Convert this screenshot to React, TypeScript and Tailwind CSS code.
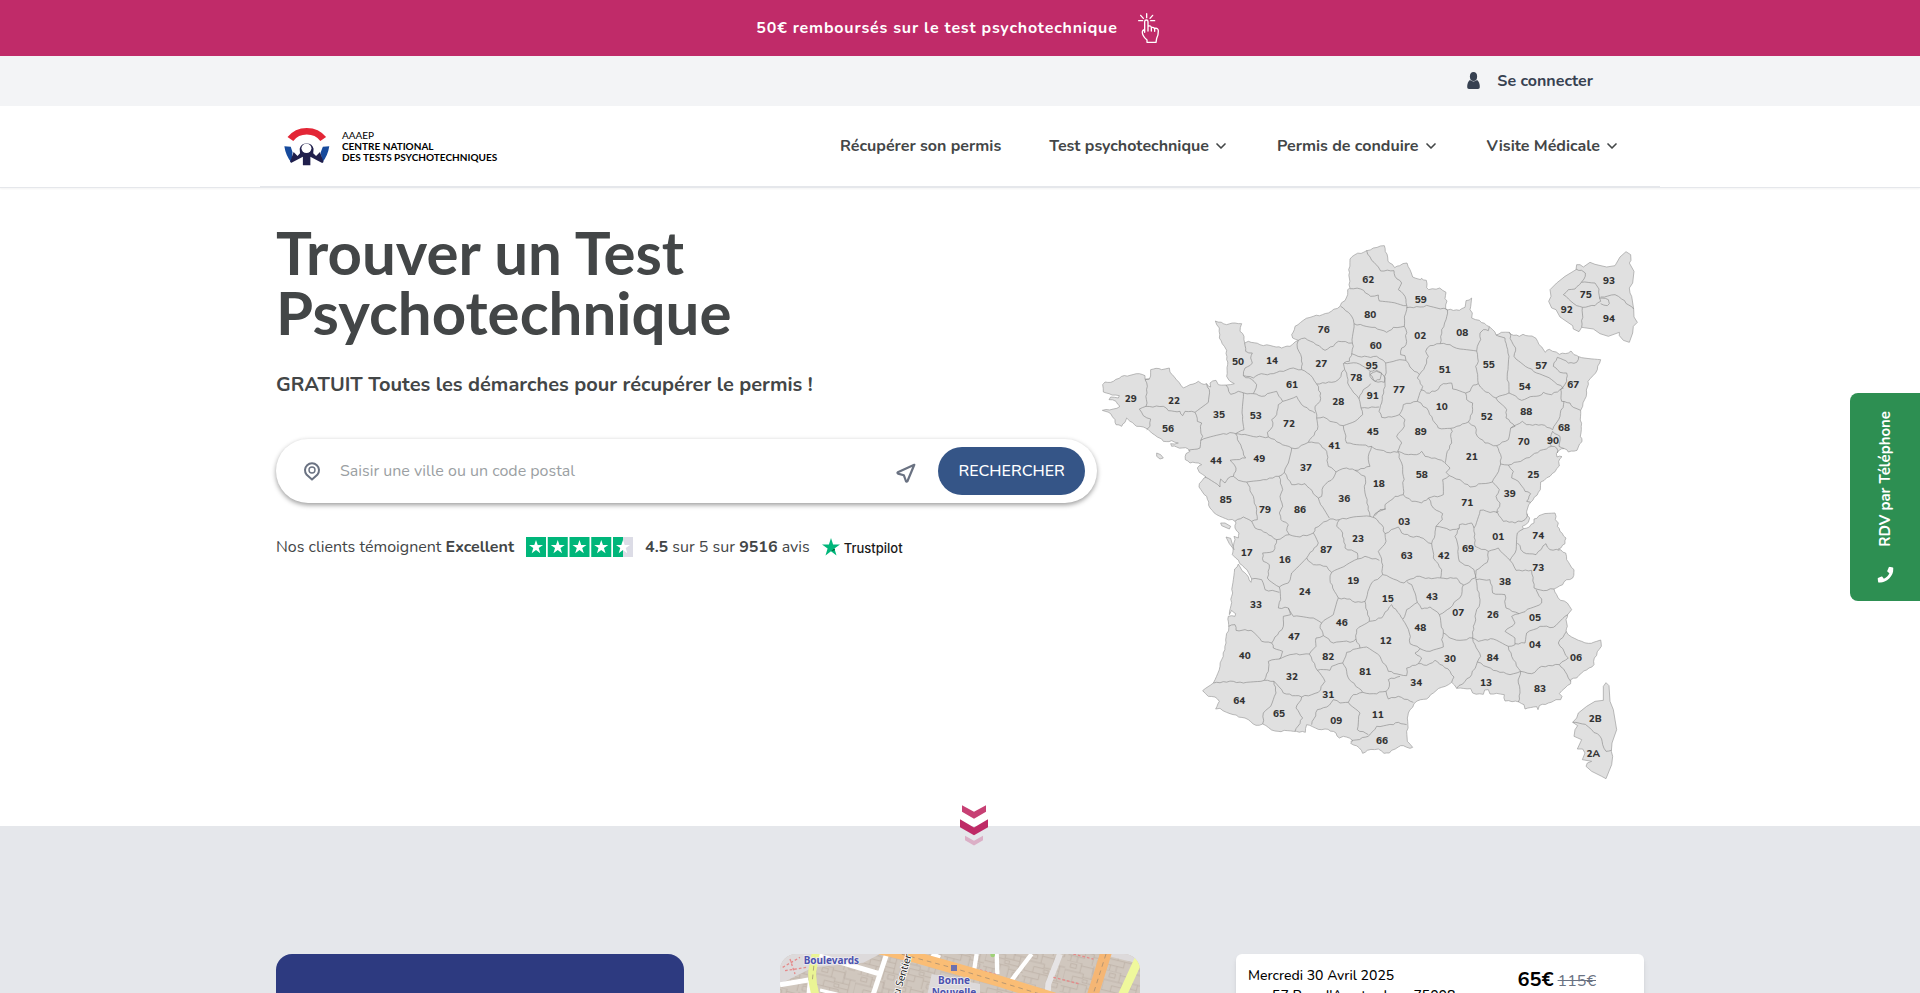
import React from 'react';
import { ChevronDown } from 'lucide-react';
import { FaPhone } from 'react-icons/fa';

const NAV_ITEMS = [
  { label: 'Récupérer son permis', hasMenu: false },
  { label: 'Test psychotechnique', hasMenu: true },
  { label: 'Permis de conduire', hasMenu: true },
  { label: 'Visite Médicale', hasMenu: true },
];

const MAINLAND =
  '913,48 923,82 924,95 937,104 944,114 959,108 981,100 994,130 998,142 1022,150 1024,146 1039,152 1040,174 1046,180 1079,175 1098,188 1095,207 1101,214 1097,238 1102,241 1138,242 1155,233 1158,213 1175,205 1170,240 1177,250 1175,265 1198,272 1228,291 1238,300 1248,316 1264,308 1288,308 1301,317 1318,320 1329,314 1356,319 1368,326 1377,345 1391,361 1396,368 1408,359 1438,374 1465,370 1473,364 1482,375 1496,381 1562,390 1552,420 1524,455 1520,490 1508,530 1502,542 1504,600 1501,620 1506,636 1495,652 1491,662 1465,667 1453,657 1438,661 1429,672 1431,682 1446,681 1436,695 1438,709 1410,740 1382,757 1381,780 1352,818 1343,835 1340,855 1349,865 1345,878 1327,890 1330,897 1348,892 1362,880 1362,868 1385,855 1425,850 1428,860 1426,870 1435,880 1432,890 1440,905 1458,925 1455,942 1435,958 1457,970 1460,990 1482,1020 1478,1045 1460,1050 1448,1065 1422,1078 1430,1095 1442,1112 1462,1120 1475,1140 1463,1155 1458,1170 1462,1190 1458,1205 1475,1222 1505,1235 1525,1241 1550,1235 1562,1231 1564,1250 1543,1285 1542,1305 1527,1315 1505,1330 1490,1345 1472,1350 1472,1362 1455,1375 1438,1392 1446,1400 1442,1410 1428,1410 1405,1420 1378,1428 1374,1440 1370,1431 1335,1438 1332,1425 1317,1417 1275,1414 1273,1395 1250,1391 1230,1393 1225,1380 1214,1381 1210,1394 1178,1390 1172,1377 1130,1376 1115,1358 1085,1373 1052,1395 1040,1408 1022,1410 1002,1422 985,1450 982,1465 982,1535 998,1553 990,1556 970,1548 955,1552 935,1562 928,1570 912,1571 895,1558 862,1562 848,1571 838,1555 812,1541 818,1532 808,1525 790,1520 778,1525 768,1510 735,1498 725,1500 680,1485 676,1508 640,1505 585,1504 548,1483 528,1487 505,1470 495,1465 450,1452 420,1436 407,1438 418,1415 405,1402 385,1400 368,1383 400,1360 420,1310 438,1240 446,1185 445,1160 465,1160 467,1152 455,1142 448,1155 455,1100 464,1018 475,1003 482,1015 500,1035 513,1058 515,1048 505,1028 488,1008 467,985 457,975 460,950 465,930 462,920 475,925 477,910 465,895 468,880 465,875 410,855 390,835 380,800 357,772 358,762 372,745 378,742 358,728 352,715 365,705 355,700 330,700 316,690 318,672 330,665 325,658 290,652 275,650 272,642 295,640 275,633 250,635 245,628 232,622 215,610 205,600 190,592 170,590 150,575 140,565 135,578 125,590 108,585 105,570 92,552 67,542 100,538 120,530 108,515 87,510 92,502 115,505 118,498 87,492 70,487 68,465 75,457 100,455 125,440 150,437 178,432 195,438 195,448 208,448 212,420 228,416 245,420 268,415 270,428 283,442 297,458 310,475 330,465 355,455 365,462 380,462 392,472 390,460 408,452 415,465 440,466 463,462 450,455 440,440 443,405 440,390 440,362 433,350 418,325 418,295 406,274 440,285 465,280 485,282 480,305 492,320 494,340 505,335 540,345 580,350 605,355 630,350 655,332 638,325 635,315 645,290 670,272 700,260 745,250 780,230 800,202 803,195 803,180 810,175 808,145 806,120 810,88 825,75 860,63 880,55 913,48';

const ISLANDS = [
  '230,670 242,675 250,685 240,688 230,680 230,670',
  '422,880 435,880 452,890 448,898 425,888 422,880',
  '438,922 452,926 462,960 448,942 438,922',
  '1570,1370 1578,1359 1587,1368 1590,1415 1600,1440 1610,1500 1596,1540 1594,1565 1598,1580 1595,1605 1578,1647 1565,1640 1535,1625 1518,1610 1522,1600 1535,1595 1507,1590 1515,1570 1508,1558 1492,1558 1505,1530 1482,1520 1485,1500 1493,1488 1478,1478 1490,1465 1495,1450 1520,1430 1545,1415 1570,1412 1570,1370',
  '1490,105 1500,105 1510,112 1530,98 1545,104 1580,112 1605,108 1620,82 1638,66 1652,75 1653,92 1648,100 1662,125 1658,160 1648,175 1650,190 1655,200 1661,238 1662,262 1672,278 1660,290 1658,310 1648,338 1630,332 1618,318 1618,308 1585,320 1560,312 1540,298 1505,293 1497,306 1480,298 1478,288 1440,262 1428,240 1415,235 1406,215 1413,200 1410,180 1430,160 1455,140 1488,120 1490,105',
];

// Department borders, grouped by area; dx/dy shift each group onto the map.
const BORDERS = [
  {
    dx: 0,
    dy: 0,
    lines: [
      '860,62 875,92 895,112 902,124 942,123 945,140 965,160 955,180 975,200 980,228',
      '810,177 842,178 872,200 895,196 898,214 935,218 980,228',
      '782,230 805,248 820,270 822,282 850,288 885,293 920,308 940,293 973,290',
      '815,372 845,382 890,380 917,400',
      '817,340 820,350 808,395 792,400 830,400 870,425',
      '822,282 817,340 775,335 760,350 735,362 700,338 675,325 655,332 652,355 665,385 665,420 690,435 710,463 755,458 775,450 792,420',
      '790,400 800,430 803,460 815,480 837,507 850,480 872,462',
      '837,507 843,535 897,532',
      '843,535 848,555 825,575 790,588 750,575 730,562 710,565 705,530 720,515 722,490 710,463',
      '870,425 885,420 905,430 900,450 885,455 870,440 870,425',
      '494,340 497,365 517,370 512,385 517,400 495,415 490,438 520,445 535,435 580,432 640,415 665,420',
      '490,438 522,455 530,465 520,492 492,490 475,485 452,494 438,466',
      '520,492 545,500 590,485 597,500 608,515 650,500 665,525 705,550',
      '608,515 595,525 590,555 575,570 578,590 562,608 565,622 600,640 635,655 655,655 685,638 712,600 710,565',
      '490,490 488,560 492,600 467,612 485,615 530,622 565,622',
      '208,448 195,450 202,470 198,530',
      '200,600 210,590 212,568 190,558 178,538 198,530 250,530 265,543 300,545 308,558 315,545 345,548',
      '380,462 388,480 385,518 345,548 352,575 365,580 362,600 368,620 362,635 360,655 325,662',
      '362,632 430,612 460,610 467,612 485,655 497,685 450,692 468,715 460,740 475,752 500,757 550,750 597,740',
      '375,742 420,772 422,748 435,760 445,745 460,740',
      '635,655 625,700 613,728 597,740 608,780 600,800 608,830 598,850 603,870 608,875 625,885 620,902 628,915',
      '500,757 520,800 530,840 532,870 515,875',
      '613,728 635,765 675,762 715,805 722,825 748,865',
      '685,638 715,640 740,665 745,710 768,727 760,745 730,770 725,800 715,805',
      '790,588 800,640 830,645 875,650 865,680 870,710 825,722 800,715 768,727',
      '825,722 855,740 855,790 870,860',
      '875,650 880,655 920,668 953,668',
    ],
  },
  {
    dx: 840,
    dy: 0,
    lines: [
      '141,228 133,262 133,290 138,300 138,345 125,355 122,375 135,378 138,392 150,412 178,435',
      '140,234 180,232 200,227 262,240 258,270 245,300 241,342 210,348 197,365 205,380 195,410 178,435 172,445 188,470 185,480 172,515',
      '241,342 270,345 300,358 350,364 352,350 362,330 360,310 370,300 385,303 388,291',
      '350,364 355,395 347,410 353,435 355,462 340,466 330,485 317,490 278,478 275,460 250,462 225,485 200,490 182,480',
      '172,515 200,535 225,580 235,595 272,596 300,588 325,577 338,540 338,520 320,510 317,490',
      '408,316 435,325 440,350 447,380 442,430 447,490 408,505 370,480 355,462',
      '448,308 455,335 467,355 462,380 505,415 530,430 575,450 610,475 600,480 575,495 550,488 545,495 520,500 485,512 447,490',
      '656,381 650,398 625,400 592,383 580,410 600,428 620,430 620,455 602,478 605,515 630,520 640,533 662,542',
      '612,515 600,560 578,600 545,585 500,585 487,575 452,595 465,590 438,565 440,540 408,505',
      '452,595 445,630 410,648 375,640 352,620 345,590 325,577',
      '410,648 422,675 422,703 445,706 490,690 550,660 575,650 567,640 578,605 600,620 597,650 613,657',
      '575,650 590,655 592,670',
      '445,706 460,725 455,745 475,755 495,785 512,792 500,815 512,818',
      '422,703 410,735 397,757 365,762 330,772 300,750 268,738 258,728 270,715 255,700 262,665 275,640 272,620 277,605 272,596',
      '397,757 418,780 408,800 420,820 410,850',
      '172,515 130,525 118,555 135,570 133,590 110,620 125,640 113,665 145,675 170,675 185,665 195,680 225,685 253,698',
      '113,665 125,700 130,740 130,795 155,815 185,820 205,805 250,795 250,775 248,750 268,738',
      '205,805 220,835 248,852 247,870 228,890',
      '118,555 95,562 65,563 57,545 65,520 75,460 77,400 110,392 138,392',
      '30,435 50,425 62,430 75,445 73,458 45,455 30,435',
      '130,795 105,800 75,825 75,838 45,852 40,862',
      '648,118 665,122 676,130 672,148 664,158 705,160 717,178 719,205 722,215 705,228 668,233 650,228 633,215 610,195 625,180 645,178 664,158',
      '717,205 745,210 748,222 742,228 722,222',
      '722,202 765,195 785,208 821,238',
      '667,233 665,293',
    ],
  },
  {
    dx: 300,
    dy: 810,
    lines: [
      '165,65 190,52 215,65 225,85 260,100 290,120 328,105 360,112 400,100 405,85 450,58 478,60 520,52 570,50 585,55 605,75 615,102 655,82 665,100 690,110 720,112',
      '585,48 600,30 618,28',
      '290,120 280,155 248,160 250,185 268,195 262,235 298,262 325,250 335,220 380,175 415,130 400,100',
      '215,238 245,240 255,270 298,278',
      '380,175 400,195 440,200 455,218 500,195 533,178 555,170 598,182',
      '478,60 470,80 488,100 495,145 532,160 533,178',
      '615,102 618,125 595,155 605,178 608,225 640,238 672,250',
      '455,218 450,240 458,265 475,295 510,298 525,308 555,305 562,285 575,250 608,225',
      '555,305 568,365 605,355 635,315 660,345 668,358',
      '568,365 530,390 528,418 540,445 500,458 488,490 455,500 450,512 412,512 388,463',
      '298,262 302,300 295,325 325,325 340,350 400,355 425,370 460,345 475,295',
      '325,325 332,345 310,350 310,380 275,430 280,445 308,455 298,478 330,465 388,463 408,440 408,415 430,408 420,385 425,370',
      '146,380 165,375 168,392 213,392 245,425 275,430',
      '298,478 265,485 265,515 253,542 190,550 160,545 100,550',
      '253,542 282,545 305,570 310,580 365,592 415,578 435,545 412,512',
      '282,545 288,580 272,620 250,640 248,673',
      '430,408 460,430 520,425 528,418',
      '540,445 560,442 600,470 625,515 660,525 680,528 680,505 715,492',
      '488,490 500,515 508,540 548,578 580,582 618,575 628,560 625,540 660,530',
      '548,578 520,585 505,608 480,610 460,600 440,622 412,630 395,675',
      '365,592 348,625 368,655 345,695',
      '505,608 540,640 532,690 565,705',
      '512,725 565,710 590,680 640,675 655,668 680,675',
      '618,575 625,598 655,590 700,608',
    ],
  },
  {
    dx: 960,
    dy: 810,
    lines: [
      '60,113 95,132 105,105 108,80 150,92 178,85 165,110 175,145 178,185 222,210 228,235',
      '12,250 20,243 50,230 95,237 122,235 125,210 100,175 95,132',
      '8,360 28,400 30,432 60,447 45,460 65,475 55,492 80,497 105,482 150,515 162,532 155,548',
      '60,447 90,455 130,442 125,420 130,400 118,345 90,322 65,328 52,308 20,330 8,360',
      '52,308 45,280 35,255 20,245',
      '118,345 150,325 185,285 190,255 180,250 170,235 122,235',
      '190,257 225,235',
      '178,85 178,75 215,70 222,85 225,140 265,155 262,188 228,212',
      '222,85 240,32 260,35 292,38 310,65 345,70 375,60 383,42',
      '292,38 295,34',
      '265,155 295,145 330,182 345,160 352,100 370,88',
      '352,130 370,158 408,165 438,132 450,150 478,152',
      '330,182 348,212 395,212 402,265 430,273 462,268',
      '228,212 228,240 270,240 278,280 315,285 318,325 357,342 425,310 425,298 408,270',
      '228,240 240,300 220,380 218,415 180,422 150,415 130,400',
      '218,415 235,425 255,420 280,418 325,440 345,435 345,415 315,395 345,370 335,350 357,342',
      '345,432 375,430 380,400 420,380 460,383 503,345',
      '500,395 475,430 505,475 478,495 425,500 395,522 362,515 340,480 325,440',
      '218,415 225,435 242,470 232,487 280,512 330,525 362,515 355,550 360,580 355,607',
      '232,487 215,525 195,545 170,566',
      '478,495 495,515 505,535 512,545',
      '518,668 556,674 575,690 600,710 608,735 618,755 634,752',
    ],
  },
];

const DEPARTMENTS: [string, number, number][] = [
  ['62', 865, 149], ['59', 1022, 209], ['80', 871, 254], ['76', 731, 298], ['60', 887, 347], ['02', 1021, 317],
  ['08', 1147, 308], ['50', 474, 395], ['14', 576, 392], ['27', 724, 401], ['95', 875, 407], ['78', 829, 443],
  ['51', 1094, 419], ['55', 1226, 404], ['57', 1384, 407], ['54', 1334, 470], ['67', 1480, 464], ['29', 152, 506],
  ['22', 282, 512], ['35', 417, 554], ['53', 527, 557], ['61', 636, 464], ['28', 775, 515], ['91', 878, 497],
  ['77', 957, 479], ['10', 1085, 530], ['52', 1220, 560], ['88', 1339, 545], ['68', 1452, 593], ['90', 1419, 632],
  ['70', 1331, 635], ['72', 627, 581], ['45', 878, 605], ['89', 1022, 605], ['56', 264, 596], ['41', 763, 647],
  ['44', 408, 692], ['49', 538, 686], ['37', 678, 713], ['21', 1175, 680], ['25', 1360, 734], ['58', 1025, 734],
  ['18', 896, 761], ['39', 1289, 791], ['36', 793, 806], ['85', 437, 809], ['79', 555, 839], ['86', 660, 839],
  ['71', 1162, 818], ['03', 973, 875], ['23', 834, 926], ['87', 739, 959], ['17', 500, 968], ['16', 614, 989],
  ['63', 980, 977], ['19', 820, 1052], ['24', 674, 1085], ['15', 923, 1106], ['33', 528, 1124], ['46', 785, 1178],
  ['47', 642, 1220], ['12', 917, 1232], ['40', 494, 1277], ['82', 745, 1280], ['32', 636, 1340], ['81', 856, 1325],
  ['31', 745, 1394], ['64', 478, 1412], ['65', 597, 1451], ['09', 769, 1472], ['11', 893, 1454], ['66', 906, 1532],
  ['34', 1009, 1358], ['48', 1021, 1193], ['43', 1056, 1100], ['42', 1091, 977], ['69', 1164, 956], ['01', 1255, 920],
  ['74', 1375, 917], ['73', 1375, 1013], ['38', 1275, 1055], ['07', 1135, 1148], ['26', 1238, 1154], ['05', 1365, 1163],
  ['30', 1110, 1286], ['84', 1238, 1283], ['04', 1365, 1244], ['06', 1488, 1283], ['13', 1218, 1358], ['83', 1380, 1376],
  ['2B', 1546, 1466], ['2A', 1540, 1572], ['93', 1587, 152], ['75', 1517, 194], ['92', 1460, 240], ['94', 1587, 266],
];

// Breaks long straight runs into small wiggles so borders look surveyed.
function roughen(points: string) {
  const pts = points.split(' ').map(p => p.split(',').map(Number));
  const out: string[] = [`${pts[0][0]},${pts[0][1]}`];
  for (let i = 1; i < pts.length; i++) {
    const [x0, y0] = pts[i - 1];
    const [x1, y1] = pts[i];
    const len = Math.hypot(x1 - x0, y1 - y0);
    const steps = Math.max(1, Math.round(len / 10));
    for (let s = 1; s < steps; s++) {
      const t = s / steps;
      const seed = Math.sin((x0 + x1) * 12.9 + (y0 + y1) * 78.2 + s * 37.7) * 43758.5;
      const shift = (seed - Math.floor(seed) - 0.5) * 5;
      const x = x0 + (x1 - x0) * t - ((y1 - y0) / len) * shift;
      const y = y0 + (y1 - y0) * t + ((x1 - x0) / len) * shift;
      out.push(`${x.toFixed(1)},${y.toFixed(1)}`);
    }
    out.push(`${x1},${y1}`);
  }
  return out.join(' ');
}

function FranceMap() {
  return (
    <svg viewBox="60 40 1620 1620" className="w-full max-w-[540px]" role="img" aria-label="Carte des départements">
      <g fill="#e0e0e0" stroke="#9a9a9a" strokeWidth="2" strokeLinejoin="round">
        <polygon points={roughen(MAINLAND)} />
        {ISLANDS.map(points => <polygon key={points} points={points} />)}
      </g>
      <g fill="none" stroke="#8c8c8c" strokeWidth="2" strokeLinejoin="round">
        {BORDERS.map(area => (
          <g key={`${area.dx}-${area.dy}`} transform={`translate(${area.dx} ${area.dy})`}>
            {area.lines.map(line => <polyline key={line} points={roughen(line)} />)}
          </g>
        ))}
      </g>
      <g fill="#333333" fontSize="30" fontWeight="800" textAnchor="middle">
        {DEPARTMENTS.map(([code, x, y]) => (
          <text key={code} x={x} y={y + 11}>{code}</text>
        ))}
      </g>
    </svg>
  );
}

function Logo() {
  return (
    <a href="#" className="flex items-center gap-3 text-black">
      <svg viewBox="0 0 136 120" className="w-[46px] h-10" aria-hidden="true">
        <g transform="scale(1.07 1)">
          <path d="M17 39 A57 57 0 0 1 109 39" fill="none" stroke="#e32636" strokeWidth="20" />
          <path d="M0 61 L18 62 L23 79 L20 110 Q4 90 0 61Z M126 61 L108 62 L102 79 L106 110 Q122 90 126 61Z" fill="#164a9c" />
          <path d="M20 110 L16 108 L26 78 L37 90 L44 82 L43 68 A20 20 0 0 1 82 68 L81 82 L89 90 L100 78 L110 108 L106 111 L73 92 L73 118 L52 118 L52 92Z" fill="#201f4c" />
          <circle cx="62" cy="67" r="14" fill="#fff" />
        </g>
      </svg>
      <span className="font-['Lato',sans-serif] text-[10px] leading-[11px] font-bold">
        <span className="block font-normal">AAAEP</span>
        <span className="block">CENTRE NATIONAL</span>
        <span className="block">DES TESTS PSYCHOTECHNIQUES</span>
      </span>
    </a>
  );
}

function TapIcon() {
  return (
    <svg viewBox="0 0 66 90" className="w-[22px] h-[30px]" fill="none" stroke="#fff" strokeWidth="4" strokeLinecap="round" strokeLinejoin="round" aria-hidden="true">
      <path d="M26 2v12M8 7l8 9M44 7l-8 9M2 23h12M38 23h12" />
      <path d="M20 58V26q0-5 5-5t5 5v28M30 40q9-4 10 4v10M40 44q9-3 10 5v6M50 46q11-2 11 8 0 14-5 22l-2 12H27v-7Q13 70 13 58q0-7 7-8" />
    </svg>
  );
}

function PinIcon() {
  return (
    <svg viewBox="0 0 18 20" className="w-[18px] h-5" fill="none" stroke="currentColor" strokeLinejoin="round" aria-hidden="true">
      <path d="M9 18.6 3.7 13.8A7 7 0 1 1 14.3 13.8Z" strokeWidth="2" />
      <circle cx="9" cy="9" r="3" strokeWidth="1.4" />
    </svg>
  );
}

function LocateIcon() {
  return (
    <svg viewBox="0 0 20 20" className="w-5 h-5" fill="none" stroke="currentColor" strokeWidth="2.2" strokeLinejoin="round" aria-hidden="true">
      <path d="M18.3 1.8 1.8 9.2Q1 10 2 10.6L7.8 12.2 9.9 18Q10.6 19 11.4 18.2Z" />
    </svg>
  );
}

const STAR = 'M10 3 L11.7 8 L17 8 L12.7 11.1 L14.3 16.2 L10 13.1 L5.7 16.2 L7.3 11.1 L3 8 L8.3 8Z';

function RatingStars() {
  return (
    <svg viewBox="0 0 107 20" className="w-[107px] h-5" role="img" aria-label="4,5 étoiles sur 5">
      {[0, 1, 2, 3, 4].map(i => (
        <g key={i} transform={`translate(${i * 21.75} 0)`}>
          <rect width="20" height="20" fill={i === 4 ? '#dcdce6' : '#00b67a'} />
          {i === 4 && <rect width="10" height="20" fill="#00b67a" />}
          <path d={STAR} fill="#fff" />
        </g>
      ))}
    </svg>
  );
}

function ScrollHint() {
  return (
    <svg viewBox="0 0 84 122" className="w-7 h-[41px]" aria-hidden="true">
      <path d="M6 0 L42 20 L78 0 V20 L42 41 L6 20Z" fill="#c74074" />
      <path d="M0 42 L42 67 L84 42 V66 L42 90 L0 66Z" fill="#be2a66" />
      <path d="M15 92 L42 107 L69 92 V105 L42 121 L15 105Z" fill="#dbafc6" />
    </svg>
  );
}

function StreetMap() {
  return (
    <svg viewBox="0 0 1080 480" className="block w-full rounded-2xl" role="img" aria-label="Plan du quartier">
      <defs>
        <pattern id="blocks" width="120" height="96" patternUnits="userSpaceOnUse" patternTransform="rotate(14)">
          <rect width="120" height="96" fill="#d0c7be" />
          <path
            d="M0 0H46V30H0M46 8H84V40H58V30H46M84 0V24H120M84 40H104V24M0 30V62H28V44H58V40M28 62H50V80H0M50 62H76V96M76 70H120M76 56H104V40M10 80V96M30 80V96M104 56V70M14 8H32V20H14ZM60 46H74V56H60ZM90 76H110V90H90Z"
            fill="none"
            stroke="#b8aca1"
            strokeWidth="2"
          />
        </pattern>
      </defs>
      <rect width="1080" height="480" fill="url(#blocks)" />
      <g fill="#dddadb">
        <path d="M0 0H300L250 26 100 40 0 90Z" />
        <path d="M455 60 600 90 600 130 440 130Z" />
        <path d="M960 0 1080 30V-10H960Z" />
      </g>
      <g fill="none" stroke="#fff">
        <path d="M115 5 300 60M0 92 85 78M320 0 270 150M455 0 480 12" strokeWidth="15" />
        <path d="M590 0 582 50M755 0 690 85M650 0 652 60M90 80 78 200" strokeWidth="13" />
        <path d="M120 108 210 130" strokeWidth="10" />
      </g>
      <path d="M840 0 805 90 800 160" fill="none" stroke="#e6e4e5" strokeWidth="18" />
      <g fill="none" stroke="#e58a8a" strokeWidth="4" strokeDasharray="8 6">
        <path d="M8 40 60 10M15 50 80 40M30 15 45 60M600 48 650 62M820 70 900 90M880 0 940 15" />
      </g>
      <path d="M109 -10 97 50Q94 90 112 140L170 480" fill="none" stroke="#eaf494" strokeWidth="24" />
      <path d="M1080 8 1024 130 900 480" fill="none" stroke="#eff89c" strokeWidth="26" />
      <path d="M980 -10 955 70 920 180 850 480" fill="none" stroke="#f5b674" strokeWidth="34" />
      <path d="M300 -16 400 8 520 42 660 82 820 132 1080 210" fill="none" stroke="#fabd75" strokeWidth="34" />
      <g fill="none" stroke="#97856f" strokeWidth="2" strokeDasharray="14 12">
        <path d="M340 -6 520 42 820 132M978 0 935 135M104 10 97 80" />
      </g>
      <rect x="513" y="33" width="18" height="18" fill="#6d70ae" />
      <circle cx="638" cy="3" r="7" fill="#9ed178" />
      <g className="font-['Noto_Sans',sans-serif]" fontWeight="700" fontSize="30" fill="#4b52ae" stroke="#eeeaf0" strokeWidth="5" paintOrder="stroke">
        <text x="71" y="31">Boulevards</text>
        <text x="474" y="90">Bonne</text>
        <text x="455" y="125">Nouvelle</text>
      </g>
      <text transform="translate(353 142) rotate(-73)" className="font-['Noto_Sans',sans-serif]" fontSize="30" fill="#222" stroke="#fff" strokeWidth="5" paintOrder="stroke">
        du Sentier
      </text>
    </svg>
  );
}

export default function App() {
  return (
    <div className="relative h-screen overflow-hidden bg-white font-['Nunito','Lato',sans-serif] text-base text-[#434647]">
      <a href="#" className="flex h-14 items-center justify-center gap-5 bg-[#c02b69] pr-1 font-bold tracking-wider text-white">
        50€ remboursés sur le test psychotechnique
        <TapIcon />
      </a>

      <div className="bg-gray-100">
        <div className="mx-auto flex h-[50px] max-w-[1400px] items-center justify-end pr-[67px]">
          <a href="#" className="flex items-center gap-4 font-bold text-[#374151]">
            <svg viewBox="0 0 16 20" className="w-[15px] h-[18px]" fill="currentColor" aria-hidden="true">
              <ellipse cx="8" cy="5" rx="4" ry="5" />
              <path d="M4 9Q8 12 12 9 15 11 15 17 15 19 13 19H3Q1 19 1 17 1 11 4 9Z" />
            </svg>
            Se connecter
          </a>
        </div>
      </div>

      <header className="border-b border-gray-200 shadow-xs">
        <div className="mx-auto flex h-[81px] max-w-[1400px] items-center justify-between border-b border-gray-200 pl-6 pr-10">
          <Logo />
          <nav className="flex gap-12">
            {NAV_ITEMS.map(item => (
              <a key={item.label} href="#" className="flex items-center gap-1 font-bold">
                {item.label}
                {item.hasMenu && <ChevronDown className="w-4 h-4" strokeWidth={2.5} />}
              </a>
            ))}
          </nav>
        </div>
      </header>

      <main>
        <section className="mx-auto flex h-[638px] max-w-[1400px] px-4">
          <div className="w-3/5 pt-[34px]">
            <h1 className="max-w-[600px] font-['Lato',sans-serif] text-6xl leading-[60px] font-bold">
              Trouver un Test Psychotechnique
            </h1>
            <p className="mt-[29px] text-xl leading-7 font-bold">GRATUIT Toutes les démarches pour récupérer le permis !</p>

            <form className="mt-10 flex h-16 items-center rounded-full bg-white pr-3 pl-6 shadow-[0_2px_5px_rgba(0,0,0,0.4)]">
              <label htmlFor="city" aria-label="Ville ou code postal" className="mr-4 flex w-6 justify-center text-gray-500">
                <PinIcon />
              </label>
              <input
                id="city"
                type="text"
                placeholder="Saisir une ville ou un code postal"
                className="min-w-0 flex-1 outline-none placeholder:text-[#9b9fa3]"
              />
              <button type="button" aria-label="Me localiser" className="mr-5 px-0.5 pt-1 text-gray-500">
                <LocateIcon />
              </button>
              <button type="submit" className="h-12 rounded-full bg-[#355587] px-5 font-medium text-white">
                RECHERCHER
              </button>
            </form>

            <div className="mt-8 flex h-6 items-center gap-3">
              <p>Nos clients témoignent <b>Excellent</b></p>
              <RatingStars />
              <p><b>4.5</b> sur 5 sur <b>9516</b> avis</p>
              <a href="#" className="flex items-center gap-1 font-['Inter',sans-serif] text-[13px] font-medium text-[#191919]">
                <svg viewBox="0 0 18 18" className="w-[18px] h-[18px]" aria-hidden="true">
                  <path d="M9 0 L11.1 6.5 H18 L12.4 10.5 L14.5 17.5 L9 13.3 L3.5 17.5 L5.6 10.5 L0 6.5 H6.9Z" fill="#00b67a" />
                  <path d="M12.4 10.5 L13 12 L9 13.3Z" fill="#005128" />
                </svg>
                <span className="pt-1">Trustpilot</span>
              </a>
            </div>
          </div>

          <div className="flex w-2/5 items-start justify-center pt-[55px]">
            <FranceMap />
          </div>
        </section>

        <section className="bg-gray-200">
          <div className="mx-auto flex max-w-[1400px] justify-center pl-7">
            <div className="-mt-[21px]"><ScrollHint /></div>
          </div>
          <div className="mx-auto mt-[108px] grid max-w-[1400px] grid-cols-3 gap-[72px] px-4">
            <div className="h-60 rounded-2xl bg-[#2d3a80]" />
            <div className="px-6"><StreetMap /></div>
            <div className="h-60 rounded-md bg-white px-3 py-3 text-black shadow-md">
              <div className="flex justify-between pr-9">
                <div className="text-sm leading-5 font-medium">
                  <p>Mercredi 30 Avril 2025</p>
                  <p className="pl-6">57 Rue d'Amsterdam, 75008</p>
                </div>
                <p className="text-base leading-7">
                  <b className="text-xl">65€</b> <s className="text-gray-500">115€</s>
                </p>
              </div>
            </div>
          </div>
        </section>
      </main>

      <button
        type="button"
        className="fixed top-[393px] right-0 flex h-52 w-[70px] items-center justify-center rounded-l-lg bg-[#2d8f52] text-white"
      >
        <span className="flex rotate-180 items-center gap-5 text-[15px] font-bold [writing-mode:vertical-rl]">
          <FaPhone className="w-4 h-4 rotate-180" />
          RDV par Téléphone
        </span>
      </button>
    </div>
  );
}
